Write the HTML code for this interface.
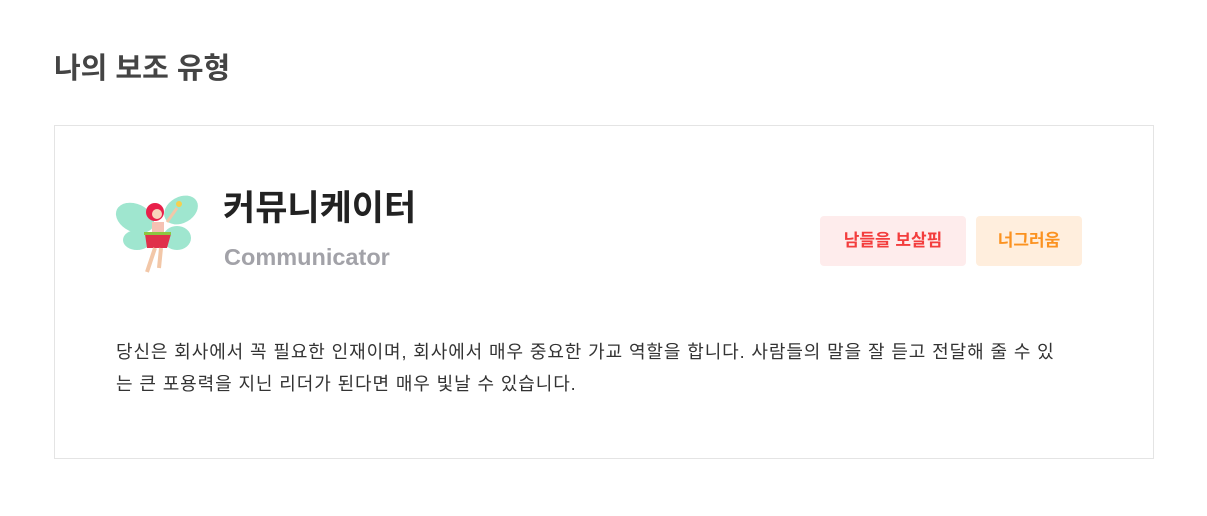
<!DOCTYPE html>
<html><head><meta charset="utf-8"><style>
body{margin:0;background:#fff;width:1207px;height:516px;overflow:hidden;font-family:"Liberation Sans","Noto Sans CJK KR",sans-serif;color:#333}
h2{position:absolute;left:54px;top:50px;margin:0;font-size:29px;font-weight:700;color:#444;line-height:38px}
.card{position:absolute;left:54px;top:125px;width:1098px;height:332px;border:1px solid #e4e4e4}
.title{position:absolute;left:168px;top:60px;font-size:35px;font-weight:700;color:#222;line-height:46px}
.sub{position:absolute;left:169px;top:118px;font-size:23.5px;font-weight:700;color:#a2a2a8}
.tag{position:absolute;top:90px;height:50px;line-height:50px;border-radius:4px;font-size:17px;font-weight:700;text-align:center}
.t1{left:765px;width:146px;background:#feecec;color:#f33d3d}
.t2{left:921px;width:106px;background:#ffeedd;color:#fb9220}
.desc{position:absolute;left:61px;top:210px;width:950px;font-size:18px;letter-spacing:0.9px;line-height:32px;color:#333;word-break:break-all}
</style></head><body>
<h2>나의 보조 유형</h2>
<div class="card">
<svg style="position:absolute;left:60px;top:62px" width="86" height="88" viewBox="0 0 86 88">
<ellipse cx="20" cy="30" rx="20" ry="14" fill="#9fe6cf" transform="rotate(25 20 30)"/>
<ellipse cx="66" cy="22" rx="18" ry="13" fill="#9fe6cf" transform="rotate(-30 66 22)"/>
<ellipse cx="22" cy="52" rx="14" ry="10" fill="#9fe6cf"/>
<ellipse cx="62" cy="50" rx="14" ry="12" fill="#9fe6cf"/>
<circle cx="40" cy="24" r="9" fill="#e8204a"/>
<circle cx="42" cy="26" r="5" fill="#f9d4bd"/>
<rect x="37" y="34" width="12" height="10" fill="#f5c1b3"/>
<polygon points="32,60 52,60 56,46 30,46" fill="#e0304a"/>
<rect x="29" y="44" width="27" height="3" fill="#8dc63f"/>
<line x1="40" y1="60" x2="32" y2="84" stroke="#f2c7a8" stroke-width="4"/>
<line x1="46" y1="60" x2="44" y2="80" stroke="#f2c7a8" stroke-width="4"/>
<line x1="52" y1="34" x2="62" y2="20" stroke="#f2c7a8" stroke-width="3"/>
<circle cx="64" cy="16" r="3" fill="#f6d04d"/>
</svg>
<div class="title">커뮤니케이터</div>
<div class="sub">Communicator</div>
<div class="tag t1">남들을 보살핌</div>
<div class="tag t2">너그러움</div>
<div class="desc">당신은 회사에서 꼭 필요한 인재이며, 회사에서 매우 중요한 가교 역할을 합니다. 사람들의 말을 잘 듣고 전달해 줄 수 있는 큰 포용력을 지닌 리더가 된다면 매우 빛날 수 있습니다.</div>
</div>
</body></html>
